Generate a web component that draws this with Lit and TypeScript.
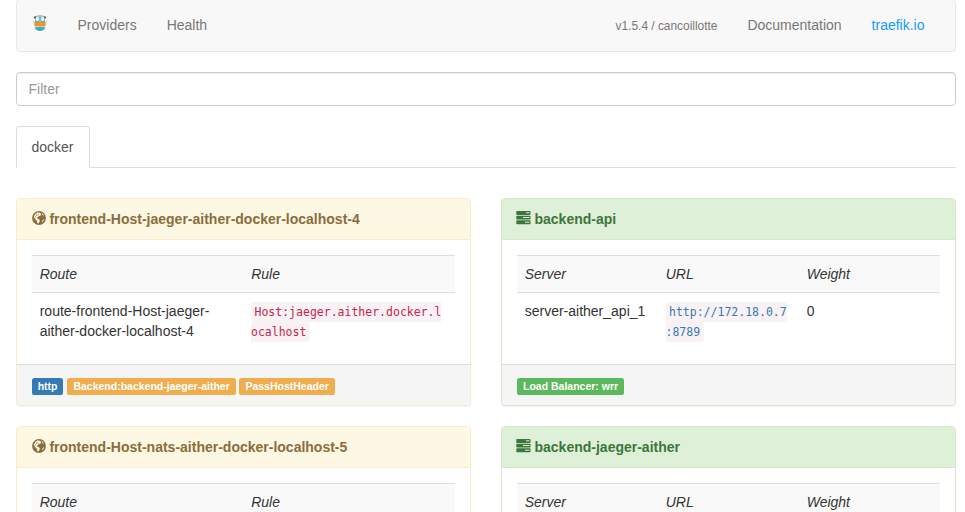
import { LitElement, html, css, svg } from "lit";
import { customElement, property } from "lit/decorators.js";

const globe = svg`<svg class="icon" width="14" height="14" viewBox="0 0 14 14">
  <circle cx="7" cy="7" r="6.9" fill="#8a6d3b"/>
  <g fill="#fcf8e3">
    <path d="M3.3 3.1 5.2 1.5 6.8 1.4 8.6 2 8.9 3.2 8.7 4.4 7.5 5 6.6 5.1 6.2 6.2 5 6.4 4.7 7.6 6.2 7.7 7.8 8.9 7.6 10.5 6.5 12.4 5.2 12 5.1 9.9 3.5 8.4 2.1 6.6 2 5z"/>
    <path d="M9.6 2 10.8 2.7 11.9 4.2 11 4.5 10.2 3.5z"/>
    <path d="M11.9 8.1 12.2 8.3 11 10.6 9.8 11.5 10.5 9.6z"/>
  </g>
  <path fill="#8a6d3b" d="M4.1 3.5h1v1h-1zM3 5.4h1v.8H3zM5.6 3.6h1v.8h-1z"/>
</svg>`;

const tasks = svg`<svg class="icon" width="15" height="14" viewBox="0 0 15 14">
  <g fill="#3c763d"><rect x=".3" y="0" width="14.2" height="4" rx=".8"/><rect x=".3" y="4.7" width="14.2" height="3.8" rx=".8"/><rect x=".3" y="9.2" width="14.2" height="4" rx=".8"/></g>
  <g fill="#dff0d8"><rect x="10" y="1.3" width="3.4" height="1"/><rect x="7" y="6" width="6.4" height="1"/><rect x="9" y="10.7" width="4.4" height="1"/></g>
</svg>`;

const gopher = svg`<svg class="logo" width="14" height="16" viewBox="0 0 14 16">
  <circle cx="2.3" cy="2.6" r="1.4" fill="#6d5552"/><circle cx="11.7" cy="2.6" r="1.4" fill="#6d5552"/>
  <path fill="#37a9c6" d="M2.6 1.8Q3.4.2 7 .2t4.4 1.6l.6 5.5-.2 6Q10.6 16 7 16t-4.8-2.7L2 7.3z"/>
  <path fill="#c3d3d8" d="M3.6.6h6.8v1.2H3.6z"/>
  <circle cx="4.6" cy="4" r="2" fill="#fff"/><circle cx="9.4" cy="4" r="2" fill="#fff"/>
  <circle cx="5" cy="3.8" r=".5" fill="#777"/><circle cx="9" cy="3.8" r=".5" fill="#777"/>
  <path fill="#6b5145" d="M6.3 4.6h1.4v.9H6.3z"/><path fill="#f7e9dc" d="M6.2 5.5h1.6v1.2H6.2z"/>
  <path fill="#f0932b" d="M1.4 6.8 4 6.4l3 1 3-1 2.6.4.2 3.6L10 11H4l-2.8-.6z"/>
  <path fill="#f3e3a5" d="M0 5.6h1.2v1.6H0zM12.8 5.6H14v1.6h-1.2z"/>
  <path fill="#f6c899" d="M2.2 11h9.6l-.2 1.3H8.4L7 11.6l-1.4.7H2.4z"/>
</svg>`;

interface Panel {
  kind: "frontend" | "backend";
  title: string;
  heads: string[];
  cells: string[];
  labels: { tone: string; text: string }[];
}

const panels: Panel[] = [
  {
    kind: "frontend",
    title: "frontend-Host-jaeger-aither-docker-localhost-4",
    heads: ["Route", "Rule"],
    cells: ["route-frontend-Host-jaeger-aither-docker-localhost-4", "Host:jaeger.aither.docker.localhost"],
    labels: [
      { tone: "primary", text: "http" },
      { tone: "warning", text: "Backend:backend-jaeger-aither" },
      { tone: "warning", text: "PassHostHeader" },
    ],
  },
  {
    kind: "backend",
    title: "backend-api",
    heads: ["Server", "URL", "Weight"],
    cells: ["server-aither_api_1", "http://172.18.0.7:8789", "0"],
    labels: [{ tone: "success", text: "Load Balancer: wrr" }],
  },
  {
    kind: "frontend",
    title: "frontend-Host-nats-aither-docker-localhost-5",
    heads: ["Route", "Rule"],
    cells: [],
    labels: [],
  },
  {
    kind: "backend",
    title: "backend-jaeger-aither",
    heads: ["Server", "URL", "Weight"],
    cells: [],
    labels: [],
  },
];

@customElement("provider-panel")
export class ProviderPanel extends LitElement {
  @property({ attribute: false }) panel!: Panel;

  static styles = css`
    :host { display: block; min-width: 0; }
    .panel { box-sizing: border-box; border: 1px solid; border-radius: 4px; background: #fff; box-shadow: 0 1px 1px rgba(0, 0, 0, .05); }
    .frontend { border-color: #faebcc; }
    .backend { border-color: #d6e9c6; }
    .heading { display: flex; padding: 10px 15px; border-bottom: 1px solid; border-color: inherit; border-radius: 3px 3px 0 0; font-weight: bold; line-height: 20px; }
    .frontend .heading { color: #8a6d3b; background: #fcf8e3; }
    .backend .heading { color: #3c763d; background: #dff0d8; }
    .icon { flex: none; margin-top: 2px; margin-left: -0.5px; margin-right: 3.9px; }
    .backend .icon { margin-left: -1px; margin-right: 3.5px; }
    .body { padding: 15px; }
    .row { display: grid; border-top: 1px solid #ddd; }
    .frontend .row { grid-template-columns: repeat(2, 1fr); }
    .backend .row { grid-template-columns: repeat(3, 1fr); }
    .head { background: #f9f9f9; font-style: italic; }
    .cell { padding: 8px 8px 8px 7.7px; min-width: 0; line-height: 20px; }
    .code { padding-left: 7.5px; line-break: anywhere; word-break: break-all; }
    code { font-family: "DejaVu Sans Mono", monospace; font-size: 11.5px; line-height: 16px; padding: 3px 4px 3px 3.5px; background: #f9f2f4; color: #c7254e; border-radius: 4px; }
    .backend code { color: #337ab7; }
    .footer { display: flex; gap: 3.5px; height: 20px; padding: 10px 15px; border-top: 1px solid #ddd; background: #f5f5f5; border-radius: 0 0 3px 3px; }
    .label { height: 17px; margin-top: 3px; padding: 0 6.1px 0 6px; box-sizing: border-box; border-radius: 2.6px; color: #fff; font-size: 10.5px; font-weight: bold; line-height: 16px; white-space: nowrap; }
    .primary { background: #337ab7; padding: 0 5.7px; margin-right: 0.7px; }
    .warning { background: #f0ad4e; }
    .success { background: #5cb85c; }
  `;

  render() {
    const p = this.panel;
    return html`<section class="panel ${p.kind}">
      <div class="heading">${p.kind === "frontend" ? globe : tasks}<span>${p.title}</span></div>
      <div class="body">
        <div class="row head">${p.heads.map((h) => html`<div class="cell">${h}</div>`)}</div>
        ${p.cells.length
          ? html`<div class="row">${p.cells.map((c, i) =>
              i === 1 ? html`<div class="cell code"><code>${c}</code></div>` : html`<div class="cell">${c}</div>`)}</div>`
          : ""}
      </div>
      ${p.labels.length
        ? html`<div class="footer">${p.labels.map((l) => html`<span class="label ${l.tone}">${l.text}</span>`)}</div>`
        : ""}
    </section>`;
  }
}

@customElement("app-root")
export class AppRoot extends LitElement {
  static styles = css`
    :host { display: block; box-sizing: border-box; height: 512px; overflow: hidden; padding: 0 9px 0 16px; background: #fff; color: #333; font: 14px/20px "Liberation Sans", Arial, sans-serif; }
    .navbar { display: flex; box-sizing: border-box; height: 53px; margin-top: -1px; padding: 0 15.5px 0 15px; border: 1px solid #e7e7e7; border-radius: 4px; background: #f8f8f8; color: #777; }
    .logo { margin: 15px 15.5px 0 1px; }
    .item { padding: 15px; }
    .right { display: flex; margin-left: auto; }
    .version { padding-top: 16px; font-size: 11.9px; }
    .link { color: #109cfa; }
    .filter { display: block; box-sizing: border-box; width: 100%; height: 34px; margin: 20px 0; padding: 6px 12px 6px 11.5px; border: 1px solid #ccc; border-radius: 4px; box-shadow: inset 0 1px 1px rgba(0, 0, 0, .075); font: inherit; outline: none; }
    .filter::placeholder { color: #999; opacity: 1; }
    .tabs { display: flex; border-bottom: 1px solid #ddd; }
    .tab { margin-bottom: -1px; padding: 10px 15.5px 10px 14.5px; border: 1px solid #ddd; border-bottom-color: #fff; border-radius: 4px 4px 0 0; background: #fff; color: #555; }
    .grid { display: grid; grid-template-columns: repeat(2, 1fr); gap: 20px 30px; margin-top: 30px; }
  `;

  render() {
    return html`
      <nav class="navbar">
        ${gopher}
        <span class="item">Providers</span>
        <span class="item">Health</span>
        <div class="right">
          <span class="item version">v1.5.4 / cancoillotte</span>
          <span class="item">Documentation</span>
          <span class="item link">traefik.io</span>
        </div>
      </nav>
      <input class="filter" type="text" placeholder="Filter" />
      <div class="tabs"><span class="tab">docker</span></div>
      <main class="grid">${panels.map((p) => html`<provider-panel .panel=${p}></provider-panel>`)}</main>
    `;
  }
}
